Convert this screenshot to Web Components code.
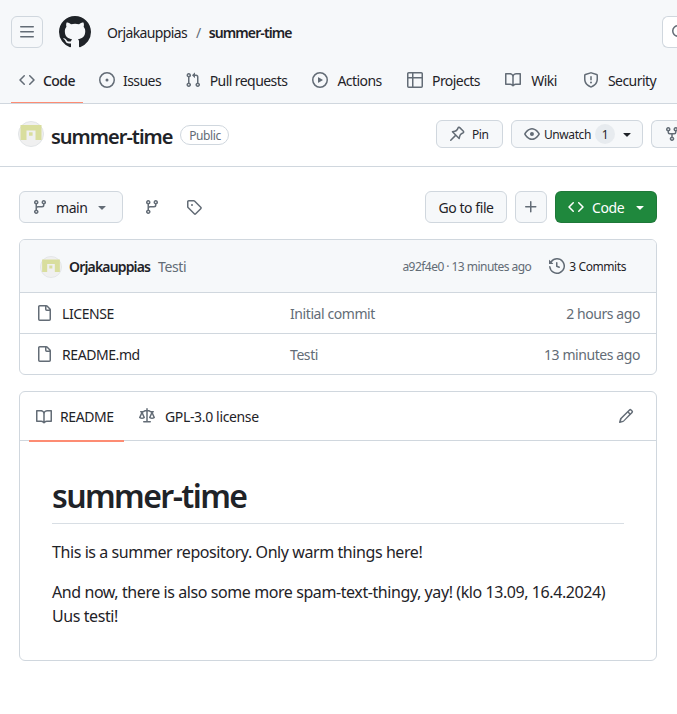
<!DOCTYPE html>
<html lang="en"><head><meta charset="utf-8"><title>summer-time</title>
<style>
html,body{margin:0;padding:0;background:#fff;overflow:hidden}
body{font-family:"Noto Sans","Open Sans",sans-serif;font-size:14px;color:#1f2328;letter-spacing:-.03em;width:677px;height:714px}
</style></head><body>
<gh-app>
  <gh-header>
    <gh-nav-tab icon="code" w="32" selected>Code</gh-nav-tab>
    <gh-nav-tab icon="issue" w="38">Issues</gh-nav-tab>
    <gh-nav-tab icon="pr" w="79">Pull requests</gh-nav-tab>
    <gh-nav-tab icon="play" w="47">Actions</gh-nav-tab>
    <gh-nav-tab icon="table" w="50">Projects</gh-nav-tab>
    <gh-nav-tab icon="book" w="30">Wiki</gh-nav-tab>
    <gh-nav-tab icon="shield" w="50">Security</gh-nav-tab>
  </gh-header>
  <gh-repo-head></gh-repo-head>
  <gh-toolbar></gh-toolbar>
  <gh-file-box>
    <gh-file-row name="LICENSE" msg="Initial commit" time="2 hours ago"></gh-file-row>
    <gh-file-row name="README.md" msg="Testi" time="13 minutes ago"></gh-file-row>
  </gh-file-box>
  <gh-readme>
    <h1 slot="title">summer-time</h1>
    <p>This is a summer repository. Only warm things here!</p>
    <p>And now, there is also some more spam-text-thingy, yay! (klo 13.09, 16.4.2024)<br>Uus testi!</p>
  </gh-readme>
</gh-app>
<script>
const P={
code:"m11.28 3.22 4.25 4.25a.75.75 0 0 1 0 1.06l-4.25 4.25a.749.749 0 0 1-1.275-.326.749.749 0 0 1 .215-.734L13.94 8l-3.72-3.72a.749.749 0 0 1 .326-1.275.749.749 0 0 1 .734.215Zm-6.56 0a.751.751 0 0 1 1.042.018.751.751 0 0 1 .018 1.042L2.06 8l3.72 3.72a.749.749 0 0 1-.326 1.275.749.749 0 0 1-.734-.215L.47 8.53a.75.75 0 0 1 0-1.06Z",
issue:"M8 9.5a1.5 1.5 0 1 0 0-3 1.5 1.5 0 0 0 0 3ZM8 0a8 8 0 1 1 0 16A8 8 0 0 1 8 0ZM1.5 8a6.5 6.5 0 1 0 13 0 6.5 6.5 0 0 0-13 0Z",
pr:"M1.5 3.25a2.25 2.25 0 1 1 3 2.122v5.256a2.251 2.251 0 1 1-1.5 0V5.372A2.25 2.25 0 0 1 1.5 3.25Zm5.677-.177L9.573.677A.25.25 0 0 1 10 .854V2.5h1A2.5 2.5 0 0 1 13.5 5v5.628a2.251 2.251 0 1 1-1.5 0V5a1 1 0 0 0-1-1h-1v1.646a.25.25 0 0 1-.427.177L7.177 3.427a.25.25 0 0 1 0-.354ZM3.75 2.5a.75.75 0 1 0 0 1.5.75.75 0 0 0 0-1.5Zm0 9.5a.75.75 0 1 0 0 1.5.75.75 0 0 0 0-1.5Zm8.25.75a.75.75 0 1 0 1.5 0 .75.75 0 0 0-1.5 0Z",
play:"M8 0a8 8 0 1 1 0 16A8 8 0 0 1 8 0ZM1.5 8a6.5 6.5 0 1 0 13 0 6.5 6.5 0 0 0-13 0Zm4.879-2.773 4.264 2.559a.25.25 0 0 1 0 .428l-4.264 2.559A.25.25 0 0 1 6 10.559V5.442a.25.25 0 0 1 .379-.215Z",
table:"M0 1.75C0 .784.784 0 1.75 0h12.5C15.216 0 16 .784 16 1.75v12.5A1.75 1.75 0 0 1 14.25 16H1.75A1.75 1.75 0 0 1 0 14.25ZM6.5 6.5v8h7.75a.25.25 0 0 0 .25-.25V6.5Zm8-1.5V1.75a.25.25 0 0 0-.25-.25H6.5V5Zm-13 1.5v7.75c0 .138.112.25.25.25H5v-8ZM5 5V1.5H1.75a.25.25 0 0 0-.25.25V5Z",
book:"M0 1.75A.75.75 0 0 1 .75 1h4.253c1.227 0 2.317.59 3 1.501A3.743 3.743 0 0 1 11.006 1h4.245a.75.75 0 0 1 .75.75v10.5a.75.75 0 0 1-.75.75h-4.507a2.25 2.25 0 0 0-1.591.659l-.622.621a.75.75 0 0 1-1.06 0l-.622-.621A2.25 2.25 0 0 0 5.258 13H.75a.75.75 0 0 1-.75-.75Zm7.251 10.324.004-5.073-.002-2.253A2.25 2.25 0 0 0 5.003 2.5H1.5v9h3.757a3.75 3.75 0 0 1 1.994.574ZM8.755 4.75l-.004 7.322a3.752 3.752 0 0 1 1.992-.572H14.5v-9h-3.495a2.25 2.25 0 0 0-2.25 2.25Z",
shield:"M7.467.133a1.748 1.748 0 0 1 1.066 0l5.25 1.68A1.75 1.75 0 0 1 15 3.48V7c0 1.566-.32 3.182-1.303 4.682-.983 1.498-2.585 2.813-5.032 3.855a1.697 1.697 0 0 1-1.33 0c-2.447-1.042-4.049-2.357-5.032-3.855C1.32 10.182 1 8.566 1 7V3.48a1.75 1.75 0 0 1 1.217-1.667Zm.61 1.429a.25.25 0 0 0-.153 0l-5.25 1.68a.25.25 0 0 0-.174.238V7c0 1.358.275 2.666 1.057 3.86.784 1.194 2.121 2.34 4.366 3.297a.196.196 0 0 0 .154 0c2.245-.956 3.582-2.104 4.366-3.298C13.225 9.666 13.5 8.36 13.5 7V3.48a.251.251 0 0 0-.174-.237l-5.25-1.68ZM8.75 4.75v3a.75.75 0 0 1-1.5 0v-3a.75.75 0 0 1 1.5 0ZM9 10.5a1 1 0 1 1-2 0 1 1 0 0 1 2 0Z",
bars:"M1 2.75A.75.75 0 0 1 1.75 2h12.5a.75.75 0 0 1 0 1.5H1.75A.75.75 0 0 1 1 2.75Zm0 5A.75.75 0 0 1 1.75 7h12.5a.75.75 0 0 1 0 1.5H1.75A.75.75 0 0 1 1 7.75ZM1.75 12h12.5a.75.75 0 0 1 0 1.5H1.75a.75.75 0 0 1 0-1.5Z",
github:"M8 0c4.42 0 8 3.58 8 8a8.013 8.013 0 0 1-5.45 7.59c-.4.08-.55-.17-.55-.38 0-.27.01-1.13.01-2.2 0-.75-.25-1.23-.54-1.48 1.78-.2 3.65-.88 3.65-3.95 0-.88-.31-1.59-.82-2.15.08-.2.36-1.02-.08-2.12 0 0-.67-.22-2.2.82-.64-.18-1.32-.27-2-.27-.68 0-1.36.09-2 .27-1.53-1.03-2.2-.82-2.2-.82-.44 1.1-.16 1.92-.08 2.12-.51.56-.82 1.28-.82 2.15 0 3.06 1.86 3.75 3.64 3.95-.23.2-.44.55-.51 1.07-.46.21-1.61.55-2.33-.66-.15-.24-.6-.83-1.23-.82-.67.01-.27.38.01.53.34.19.73.9.82 1.13.16.45.68 1.31 2.69.94 0 .67.01 1.3.01 1.49 0 .21-.15.45-.55.38A7.995 7.995 0 0 1 0 8c0-4.42 3.58-8 8-8Z",
eye:"M8 2c1.981 0 3.671.992 4.933 2.078 1.27 1.091 2.187 2.345 2.637 3.023a1.62 1.62 0 0 1 0 1.798c-.45.678-1.367 1.932-2.637 3.023C11.67 13.008 9.981 14 8 14c-1.981 0-3.671-.992-4.933-2.078C1.797 10.83.88 9.576.43 8.898a1.62 1.62 0 0 1 0-1.798c.45-.677 1.367-1.931 2.637-3.022C4.33 2.992 6.019 2 8 2ZM1.679 7.932a.12.12 0 0 0 0 .136c.411.622 1.241 1.75 2.366 2.717C5.176 11.758 6.527 12.5 8 12.5c1.473 0 2.825-.742 3.955-1.715 1.124-.967 1.954-2.096 2.366-2.717a.12.12 0 0 0 0-.136c-.412-.621-1.242-1.75-2.366-2.717C10.824 4.242 9.473 3.5 8 3.5c-1.473 0-2.825.742-3.955 1.715-1.124.967-1.954 2.096-2.366 2.717ZM8 10a2 2 0 1 1-.001-3.999A2 2 0 0 1 8 10Z",
branch:"M9.5 3.25a2.25 2.25 0 1 1 3 2.122V6A2.5 2.5 0 0 1 10 8.5H6a1 1 0 0 0-1 1v1.128a2.251 2.251 0 1 1-1.5 0V5.372a2.25 2.25 0 1 1 1.5 0v1.836A2.493 2.493 0 0 1 6 7h4a1 1 0 0 0 1-1v-.628A2.25 2.25 0 0 1 9.5 3.25Zm-6 0a.75.75 0 1 0 1.5 0 .75.75 0 0 0-1.5 0Zm8.25-.75a.75.75 0 1 0 0 1.5.75.75 0 0 0 0-1.5ZM4.25 12a.75.75 0 1 0 0 1.5.75.75 0 0 0 0-1.5Z",
tag:"M1 7.775V2.75C1 1.784 1.784 1 2.75 1h5.025c.464 0 .91.184 1.238.513l6.25 6.25a1.75 1.75 0 0 1 0 2.474l-5.026 5.026a1.75 1.75 0 0 1-2.474 0l-6.25-6.25A1.752 1.752 0 0 1 1 7.775Zm1.5 0c0 .066.026.13.073.177l6.25 6.25a.25.25 0 0 0 .354 0l5.025-5.025a.25.25 0 0 0 0-.354l-6.25-6.25a.25.25 0 0 0-.177-.073H2.75a.25.25 0 0 0-.25.25ZM6 5a1 1 0 1 1 0 2 1 1 0 0 1 0-2Z",
plus:"M7.75 2a.75.75 0 0 1 .75.75V7h4.25a.75.75 0 0 1 0 1.5H8.5v4.25a.75.75 0 0 1-1.5 0V8.5H2.75a.75.75 0 0 1 0-1.5H7V2.75A.75.75 0 0 1 7.75 2Z",
history:"m.427 1.927 1.215 1.215a8.002 8.002 0 1 1-1.6 5.685.75.75 0 1 1 1.493-.154 6.5 6.5 0 1 0 1.18-4.458l1.358 1.358A.25.25 0 0 1 3.896 6H.25A.25.25 0 0 1 0 5.75V2.104a.25.25 0 0 1 .427-.177ZM7.75 4a.75.75 0 0 1 .75.75v2.992l2.028.812a.75.75 0 0 1-.557 1.392l-2.5-1A.751.751 0 0 1 7 8.25v-3.5A.75.75 0 0 1 7.75 4Z",
file:"M2 1.75C2 .784 2.784 0 3.75 0h6.586c.464 0 .909.184 1.237.513l2.914 2.914c.329.328.513.773.513 1.237v9.586A1.75 1.75 0 0 1 13.25 16h-9.5A1.75 1.75 0 0 1 2 14.25Zm1.75-.25a.25.25 0 0 0-.25.25v12.5c0 .138.112.25.25.25h9.5a.25.25 0 0 0 .25-.25V6h-2.75A1.75 1.75 0 0 1 9 4.25V1.5Zm6.75.062V4.25c0 .138.112.25.25.25h2.688l-.011-.013-2.914-2.914-.013-.011Z",
law:"M8.75.75V2h.985c.304 0 .603.08.867.231l1.29.736c.038.022.08.033.124.033h2.234a.75.75 0 0 1 0 1.5h-.427l2.111 4.692a.75.75 0 0 1-.154.838l-.53-.53.529.531-.001.002-.002.002-.006.006-.006.005-.01.01-.045.04c-.21.176-.441.327-.686.45C14.556 10.78 13.88 11 13 11a4.498 4.498 0 0 1-2.023-.454 3.544 3.544 0 0 1-.686-.45l-.045-.04-.016-.015-.006-.006-.004-.004v-.001a.75.75 0 0 1-.154-.838L12.178 4.5h-.162c-.305 0-.604-.079-.868-.231l-1.29-.736a.245.245 0 0 0-.124-.033H8.75V13h2.5a.75.75 0 0 1 0 1.5h-6.5a.75.75 0 0 1 0-1.5h2.5V3.5h-.984a.245.245 0 0 0-.124.033l-1.289.737c-.265.15-.564.23-.869.23h-.162l2.112 4.692a.75.75 0 0 1-.154.838l-.53-.53.529.531-.001.002-.002.002-.006.006-.016.015-.045.04c-.21.176-.441.327-.686.45C4.556 10.78 3.88 11 3 11a4.498 4.498 0 0 1-2.023-.454 3.544 3.544 0 0 1-.686-.45l-.045-.04-.016-.015-.006-.006-.004-.004v-.001a.75.75 0 0 1-.154-.838L2.178 4.5H1.75a.75.75 0 0 1 0-1.5h2.234a.249.249 0 0 0 .125-.033l1.288-.737c.265-.15.564-.23.869-.23h.984V.75a.75.75 0 0 1 1.5 0Zm2.945 8.477c.285.135.718.273 1.305.273s1.02-.138 1.305-.273L13 6.327Zm-10 0c.285.135.718.273 1.305.273s1.02-.138 1.305-.273L3 6.327Z",
pencil:"M11.013 1.427a1.75 1.75 0 0 1 2.474 0l1.086 1.086a1.75 1.75 0 0 1 0 2.474l-8.61 8.61c-.21.21-.47.364-.756.445l-3.251.93a.75.75 0 0 1-.927-.928l.929-3.25c.081-.286.235-.547.445-.758l8.61-8.61Zm.176 4.823L9.75 4.81l-6 6a.749.749 0 0 0-.19.324l-.62 2.17 2.17-.62a.749.749 0 0 0 .324-.19Zm1.238-3.763a.25.25 0 0 0-.354 0L10.811 3.75l1.439 1.44 1.263-1.263a.25.25 0 0 0 0-.354Z",
caret:"m4.427 7.427 3.396 3.396a.25.25 0 0 0 .354 0l3.396-3.396A.25.25 0 0 0 11.396 7H4.604a.25.25 0 0 0-.177.427Z",
fork:"M5 5.372v.878c0 .414.336.75.75.75h4.5a.75.75 0 0 0 .75-.75v-.878a2.25 2.25 0 1 1 1.5 0v.878a2.25 2.25 0 0 1-2.25 2.25h-1.5v2.128a2.251 2.251 0 1 1-1.5 0V8.5h-1.5A2.25 2.25 0 0 1 3.5 6.25v-.878a2.25 2.25 0 1 1 1.5 0ZM5 3.25a.75.75 0 1 0-1.5 0 .75.75 0 0 0 1.5 0Zm6.75.75a.75.75 0 1 0 0-1.5.75.75 0 0 0 0 1.5Zm-3 8.75a.75.75 0 1 0-1.5 0 .75.75 0 0 0 1.5 0Z",
search:"M10.68 11.74a6 6 0 0 1-7.922-8.982 6 6 0 0 1 8.982 7.922l3.04 3.04a.749.749 0 0 1-.326 1.275.749.749 0 0 1-.734-.215ZM11.5 7a4.499 4.499 0 1 0-8.997 0A4.499 4.499 0 0 0 11.5 7Z"
};
const PIN='<path fill="none" stroke="#636c76" stroke-width="1.5" stroke-linejoin="round" stroke-linecap="round" d="M10.75 1.6l3.65 3.65a1 1 0 0 1-.3 1.6l-1.25.6a3.8 3.8 0 0 0-2.1 2.6l-.6 2.45-6.7-6.7 2.45-.6a3.8 3.8 0 0 0 2.6-2.1l.6-1.25a1 1 0 0 1 1.6-.25ZM6.6 9.4l-4.85 4.85"/>';
function def(name,css,html){
  customElements.define(name,class extends HTMLElement{
    connectedCallback(){
      if(this.shadowRoot)return;
      const r=this.attachShadow({mode:"open"});
      const a=n=>this.getAttribute(n)||"";
      r.innerHTML=`<style>${css}</style>`+(typeof html==="function"?html(a,this):html);
    }
  });
}
const ic=(n,s=16,c="#636c76")=>`<gh-icon name="${n}" size="${s}" color="${c}"></gh-icon>`;
def("gh-icon",":host{display:inline-flex;flex:none}svg{display:block}",a=>{
  const s=a("size")||16,n=a("name");
  const body=n==="pin"?PIN:`<path d="${P[n]}"/>`;
  return `<svg width="${s}" height="${s}" viewBox="0 0 16 16" fill="${a("color")||"#636c76"}" fill-rule="evenodd">${body}</svg>`;
});
def("gh-avatar",":host{display:inline-flex;flex:none}svg{display:block}",a=>{
  const s=a("size")||26;
  return `<svg width="${s}" height="${s}" viewBox="0 0 26 26"><circle cx="13" cy="13" r="12.5" fill="#f0f0f0" stroke="#e1e4e6"/><path fill="#d9de9e" d="M2.5 4h21v15h-6V9.5H8.5V19h-6zM11 11.2h3.6v3.6H11z"/></svg>`;
});
def("gh-button",`:host{display:inline-flex;flex:none;box-sizing:border-box;align-items:center;justify-content:var(--jc,center);height:var(--h,32px);padding:0 var(--px,12px);gap:var(--g,8px);background:var(--bg,#f6f8fa);color:var(--fg,#1f2328);border:1px solid var(--bd,#d0d7de);border-radius:6px;font-size:var(--fs,14px);font-weight:400;white-space:nowrap;overflow:hidden}`,`<slot></slot>`);
def("gh-nav-tab",`:host{display:flex;flex:none;box-sizing:border-box;height:42px;padding:0 8px 4px;align-items:center;gap:8px;margin-bottom:-1px;border-bottom:2px solid transparent;white-space:nowrap}
:host([selected]){border-bottom-color:#fd8c73;font-weight:500}
span{display:block;text-align:center;letter-spacing:-.04em}`,(a)=>`${ic(a("icon"))}<span style="width:${a("w")}px"><slot></slot></span>`);
def("gh-header",`:host{display:block;box-sizing:border-box;height:104px;background:#f6f8fa;border-bottom:1px solid #d0d7de;padding:16px 0 0 11px;overflow:hidden}
.top{display:flex;align-items:center;height:32px;margin-bottom:14px}
.ham{box-sizing:border-box;width:32px;height:32px;border:1px solid #d0d7de;border-radius:6px;display:flex;align-items:center;justify-content:center}
.logo{margin:0 16px;display:flex}
.owner{width:81px;white-space:nowrap;letter-spacing:-.045em}.sep{color:#636c76;margin:0 8px}.repo{font-weight:600;white-space:nowrap;letter-spacing:-.065em}
.sb{box-sizing:border-box;margin-left:auto;width:15px;flex:none;height:32px;border:1px solid #d0d7de;border-right:0;border-radius:6px 0 0 6px;background:#fff;display:flex;align-items:center;padding-left:8px;overflow:hidden}
nav{display:flex;gap:8px}`,`<div class="top"><div class="ham">${ic("bars")}</div><div class="logo">${ic("github",32,"#1f2328")}</div><span class="owner">Orjakauppias</span><span class="sep">/</span><span class="repo">summer-time</span><div class="sb">${ic("search")}</div></div><nav><slot></slot></nav>`);
def("gh-repo-head",`:host{display:flex;box-sizing:border-box;height:63px;border-bottom:1px solid #d0d7de;padding:16px 0 0 18px;align-items:flex-start;overflow:hidden}
.l{display:flex;align-items:center;width:418px;flex:none;height:28px;gap:7px}
.t{font-size:20px;font-weight:600;line-height:28px;margin-top:6px;white-space:nowrap;letter-spacing:-.05em}
.b{box-sizing:border-box;width:49px;height:20px;border:1px solid #d0d7de;border-radius:10px;font-size:12px;color:#636c76;display:flex;align-items:center;justify-content:center;margin-left:1px;margin-top:2px}
.r{display:flex;gap:8px;flex:none;--h:28px;--fs:12px;--jc:flex-start}
.ct{background:rgba(175,184,193,.2);border-radius:10px;height:20px;width:20px;display:flex;align-items:center;justify-content:center;font-size:12px;margin-left:1px;flex:none}
.pin{width:67px;--g:7px}
.un{width:132px;--g:4px}
.w{width:46px}
.fk{width:40px;border-right:0}`,`<div class="l"><gh-avatar size="26"></gh-avatar><span class="t">summer-time</span><span class="b">Public</span></div><div class="r"><gh-button class="pin">${ic("pin")}<span>Pin</span></gh-button><gh-button class="un">${ic("eye")}<span class="w">Unwatch</span><span class="ct">1</span>${ic("caret",16,"#1f2328")}</gh-button><gh-button class="fk">${ic("fork")}</gh-button></div>`);
def("gh-toolbar",`:host{display:flex;box-sizing:border-box;margin:24px 20px 0 19px;height:32px;align-items:center}
.main{width:104px;--g:8px;--jc:flex-start}
.mt{width:30px}
.i{display:flex;margin-left:21px}.i+.i{margin-left:26px}
.sp{flex:1}
.go{width:82px;--px:0}.pl{width:32px;--px:0;margin-left:8px}
.cd{width:102px;margin-left:8px;--bg:#1f883d;--fg:#fff;--bd:rgba(31,35,40,.15);--jc:flex-start;--g:8px}
.ct{width:32px}`,`<gh-button class="main">${ic("branch")}<span class="mt">main</span>${ic("caret")}</gh-button><span class="i">${ic("branch")}</span><span class="i">${ic("tag")}</span><span class="sp"></span><gh-button class="go">Go to file</gh-button><gh-button class="pl">${ic("plus")}</gh-button><gh-button class="cd">${ic("code",16,"#fff")}<span class="ct">Code</span>${ic("caret",16,"#fff")}</gh-button>`);
def("gh-file-box",`:host{display:block;box-sizing:border-box;margin:16px 20px 0 19px;border:1px solid #d0d7de;border-radius:6px;overflow:hidden}
.h{display:flex;align-items:center;height:52px;background:#f6f8fa;padding:0 30px 0 20px}
.av{margin-top:2px}
.n{font-weight:600;margin-left:7px;white-space:nowrap;letter-spacing:-.06em}.m{color:#636c76;margin-left:8px}
.sp{flex:1}.meta{font-size:12px;color:#636c76;white-space:nowrap;letter-spacing:-.045em}
.c{display:flex;align-items:center;gap:4px;font-size:12px;margin-left:18px;white-space:nowrap;letter-spacing:-.035em}`,`<div class="h"><gh-avatar class="av" size="22"></gh-avatar><span class="n">Orjakauppias</span><span class="m">Testi</span><span class="sp"></span><span class="meta">a92f4e0 · 13 minutes ago</span><span class="c">${ic("history")}3 Commits</span></div><slot></slot>`);
def("gh-file-row",`:host{display:flex;box-sizing:border-box;height:41px;border-top:1px solid #d0d7de;align-items:center;padding:0 16px 0 16px;white-space:nowrap}
.n{margin-left:10px;width:228px;flex:none}.m{color:#636c76;flex:1}.t{color:#636c76}`,a=>`${ic("file")}<span class="n">${a("name")}</span><span class="m">${a("msg")}</span><span class="t">${a("time")}</span>`);
def("gh-readme",`:host{display:block;box-sizing:border-box;margin:16px 20px 0 19px;border:1px solid #d0d7de;border-radius:6px}
.tabs{display:flex;align-items:center;height:49px;border-bottom:1px solid #d0d7de;box-sizing:border-box;padding-left:9px}
.tab{display:flex;align-items:center;gap:8px;height:49px;box-sizing:border-box;padding:0 8px 0 7px;white-space:nowrap}
.on{width:95px;border-bottom:2px solid #fd8c73;margin-bottom:-1px;height:50px;padding-top:2px}
.off{margin-left:8px;gap:10px;letter-spacing:-.025em}
.sp{flex:1}.ed{margin-right:22px;display:flex}
.c{padding:32px;font-size:16px;line-height:24px}
::slotted(h1){font-size:32px;font-weight:600;line-height:40px;margin:0 0 16px;padding:3px 0 6.6px;border-bottom:1px solid #d8dee4;letter-spacing:-.05em}
::slotted(p){margin:0 0 16px}
::slotted(p:last-child){margin-bottom:0}`,`<div class="tabs"><div class="tab on">${ic("book")}<span>README</span></div><div class="tab off">${ic("law")}<span>GPL-3.0 license</span></div><span class="sp"></span><span class="ed">${ic("pencil")}</span></div><div class="c"><slot name="title"></slot><slot></slot></div>`);
def("gh-app",":host{display:block;width:677px;height:714px;overflow:hidden}","<slot></slot>");
</script>
</body></html>
